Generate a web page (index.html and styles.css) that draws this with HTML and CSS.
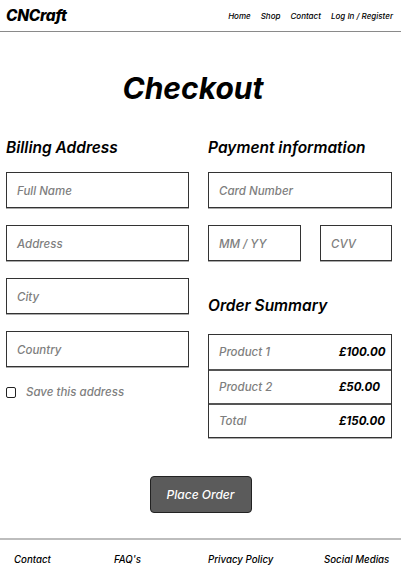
FILE: index.html
```html
<!DOCTYPE html>
<html lang="en">
<head>
<meta charset="utf-8">
<title>Checkout - CNCraft</title>
<link rel="stylesheet" href="styles.css">
</head>
<body>
<header class="topbar">
  <div class="logo">CNCraft</div>
  <nav class="nav">
    <a class="nav-link">Home</a>
    <a class="nav-link">Shop</a>
    <a class="nav-link">Contact</a>
    <a class="nav-link">Log In / Register</a>
  </nav>
</header>
<main class="main">
  <h1 class="title">Checkout</h1>
  <div class="columns">
    <section class="col">
      <h2 class="heading">Billing Address</h2>
      <div class="field">Full Name</div>
      <div class="field">Address</div>
      <div class="field">City</div>
      <div class="field">Country</div>
      <label class="save"><span class="check"></span><span class="save-text">Save this address</span></label>
    </section>
    <section class="col">
      <h2 class="heading">Payment information</h2>
      <div class="field">Card Number</div>
      <div class="pair">
        <div class="field field-exp">MM / YY</div>
        <div class="field field-cvv">CVV</div>
      </div>
      <h2 class="heading heading-summary">Order Summary</h2>
      <div class="summary">
        <div class="row"><span class="row-label">Product 1</span><span class="row-price">£100.00</span></div>
        <div class="row"><span class="row-label">Product 2</span><span class="row-price">£50.00</span></div>
        <div class="row"><span class="row-label">Total</span><span class="row-price">£150.00</span></div>
      </div>
    </section>
  </div>
  <div class="actions"><button class="place">Place Order</button></div>
</main>
<footer class="footer">
  <a class="foot-link">Contact</a>
  <a class="foot-link">FAQ's</a>
  <a class="foot-link">Privacy Policy</a>
  <a class="foot-link">Social Medias</a>
</footer>
</body>
</html>
```

FILE: styles.css
```css
* { box-sizing: border-box; }
html, body { margin: 0; padding: 0; }
body {
  width: 401px;
  height: 574px;
  overflow: hidden;
  background: #fff;
  font-family: Inter, "Liberation Sans", sans-serif;
  font-style: italic;
  color: #000;
}
.topbar {
  height: 32px;
  border-bottom: 1px solid #8a8a8a;
  display: flex;
  align-items: center;
  justify-content: space-between;
  padding: 0 8px 0 6px;
}
.logo {
  font-size: 15.5px;
  font-weight: 800;
  letter-spacing: -0.3px;
}
.nav { display: flex; gap: 10px; }
.nav-link {
  font-size: 8px;
  font-weight: 500;
}
.main { padding: 0 9px 0 6px; }
.title {
  margin: 37px 0 0;
  padding-right: 12px;
  text-align: center;
  font-size: 30px;
  font-weight: 700;
  line-height: 38px;
}
.columns {
  display: grid;
  grid-template-columns: 183px 184px;
  column-gap: 19px;
  margin-top: 31px;
}
.col { display: flex; flex-direction: column; }
.heading {
  margin: 0 0 14px;
  font-size: 15.5px;
  font-weight: 600;
  line-height: 20px;
}
.field {
  height: 36px;
  border: 1px solid #333;
  box-shadow: 0 1px 0 #aaa;
  display: flex;
  align-items: center;
  padding: 2px 0 0 10px;
  font-size: 11.5px;
  font-weight: 500;
  color: #7e7e7e;
  margin-bottom: 17px;
}
.pair { display: flex; justify-content: space-between; }
.field-exp { width: 93px; }
.field-cvv { width: 72px; }
.heading-summary { margin-top: 18px; margin-bottom: 18px; }
.save { display: flex; align-items: center; gap: 10px; margin-top: 1px; }
.check {
  width: 10px;
  height: 11px;
  border: 1px solid #222;
  border-radius: 2px;
}
.save-text { font-size: 11.5px; font-weight: 500; color: #7e7e7e; }
.summary { border: 1px solid #333; box-shadow: 0 1px 0 #aaa; }
.row {
  height: 34px;
  display: flex;
  align-items: center;
  padding-left: 10px;
  border-top: 2px solid #555;
}
.row:first-child { border-top: none; }
.row-label { width: 120px; font-size: 11.5px; font-weight: 500; color: #7e7e7e; }
.row-price { font-size: 11.5px; font-weight: 700; color: #000; }
.actions { display: flex; justify-content: center; margin-top: 38px; padding-left: 3px; }
.place {
  width: 102px;
  height: 37px;
  background: #5b5b5b;
  border: 1px solid #222;
  border-radius: 4px;
  color: #fff;
  font-family: Inter, "Liberation Sans", sans-serif;
  font-style: italic;
  font-weight: 500;
  font-size: 12px;
}
.footer {
  margin-top: 25px;
  border-top: 2px solid #bdbdbd;
  display: grid;
  grid-template-columns: 100px 94px 116px auto;
  padding: 14px 0 0 14px;
}
.foot-link { font-size: 9.7px; font-weight: 500; }
```
